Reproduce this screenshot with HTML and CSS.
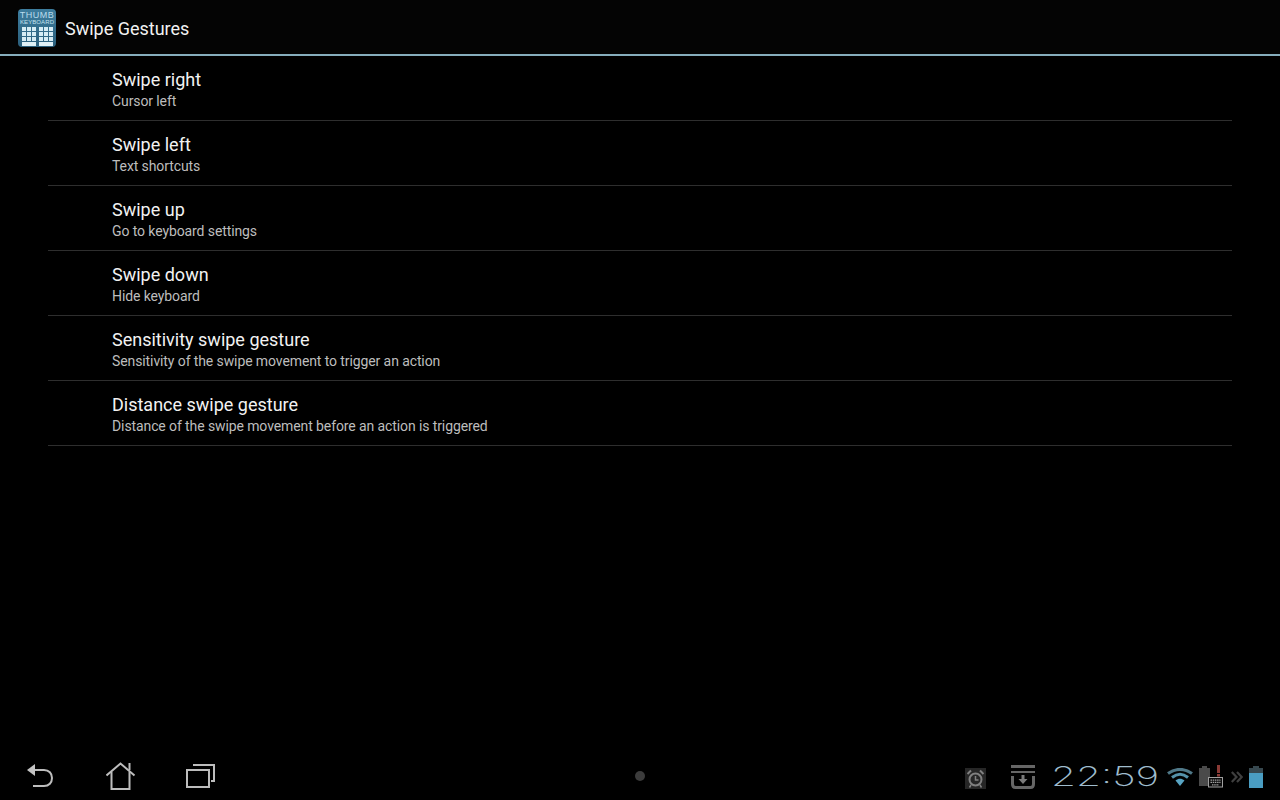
FILE: index.html
```html
<!DOCTYPE html>
<html lang="en">
<head>
<meta charset="utf-8">
<title>Swipe Gestures</title>
<link rel="stylesheet" href="styles.css">
</head>
<body>
<div class="screen">
  <header class="actionbar">
    <div class="appicon">
      <span class="thumb">THUMB</span>
      <span class="kbd">KEYBOARD</span>
      <div class="keys">
        <div class="keygrid"><i></i><i></i><i></i><i></i><i></i><i></i><i></i><i></i><i></i></div>
        <div class="keygrid"><i></i><i></i><i></i><i></i><i></i><i></i><i></i><i></i><i></i></div>
      </div>
      <div class="spacebars"><i></i><i></i></div>
    </div>
    <h1 class="apptitle">Swipe Gestures</h1>
  </header>
  <main class="list">
    <div class="row"><div class="rowtitle">Swipe right</div><div class="rowsub">Cursor left</div></div>
    <div class="row"><div class="rowtitle">Swipe left</div><div class="rowsub">Text shortcuts</div></div>
    <div class="row"><div class="rowtitle">Swipe up</div><div class="rowsub">Go to keyboard settings</div></div>
    <div class="row"><div class="rowtitle">Swipe down</div><div class="rowsub">Hide keyboard</div></div>
    <div class="row"><div class="rowtitle">Sensitivity swipe gesture</div><div class="rowsub">Sensitivity of the swipe movement to trigger an action</div></div>
    <div class="row"><div class="rowtitle">Distance swipe gesture</div><div class="rowsub">Distance of the swipe movement before an action is triggered</div></div>
  </main>
  <footer class="navbar">
    <div class="navbtns">
      <svg class="ic-back" width="30" height="30" viewBox="0 0 30 30" fill="none"><path d="M9 9H18C23 9 26 12.500 26 17C26 21.500 23 25 18 25H7" stroke="#bdbdbd" stroke-width="2"/><path d="M1 9L9 3V15Z" fill="#c4c4c4"/></svg>
      <svg class="ic-home" width="30" height="30" viewBox="0 0 30 30" fill="none"><path d="M0.500 14.500L14.500 2.500L28.500 14.500" stroke="#bdbdbd" stroke-width="2"/><path d="M5.500 11V28H23.500V11" stroke="#bdbdbd" stroke-width="2"/><path d="M23.500 2V9" stroke="#bdbdbd" stroke-width="2"/></svg>
      <svg class="ic-recent" width="30" height="30" viewBox="0 0 30 30" fill="none"><rect x="1" y="9" width="22" height="17" stroke="#bdbdbd" stroke-width="2"/><path d="M7 4H28V20H25" stroke="#bdbdbd" stroke-width="2"/></svg>
    </div>
    <div class="navdot"></div>
    <div class="status">
      <svg class="ic-alarm" width="21" height="21" viewBox="0 0 21 21" fill="none"><rect width="21" height="21" fill="#262626"/><circle cx="10.500" cy="11.500" r="6" stroke="#808080" stroke-width="2"/><path d="M10.500 8V12H13.500" stroke="#808080" stroke-width="1.500"/><path d="M2.500 6L6 2.500M18.500 6L15 2.500" stroke="#808080" stroke-width="2"/><path d="M6 17L4.500 19.500M15 17L16.500 19.500" stroke="#808080" stroke-width="1.500"/></svg>
      <svg class="ic-upload" width="24" height="24" viewBox="0 0 24 24" fill="none"><rect width="24" height="3" fill="#666"/><rect y="6" width="24" height="2" fill="#666"/><path d="M1.500 11V19C1.500 21 2.500 22.500 4.500 22.500H19.500C21.500 22.500 22.500 21 22.500 19V11" stroke="#666" stroke-width="3"/><path d="M10.500 10H13.500V14H16.500L12 19L7.500 14H10.500Z" fill="#7a7a7a"/></svg>
      <span class="clock"><span class="clocktext">22:59</span></span>
      <svg class="ic-wifi" width="26" height="18" viewBox="0 0 26 18" fill="none"><path d="M1 5.500C8 0 18 0 25 5.500" stroke="#4f7888" stroke-width="3"/><path d="M5 9.500C10 5.500 16 5.500 21 9.500" stroke="#5592aa" stroke-width="3"/><path d="M8.500 12.500C11.500 10 14.500 10 17.500 12.500L13 18Z" fill="#58a4c4"/></svg>
      <svg class="ic-kbdbatt" width="24" height="23" viewBox="0 0 24 23"><rect x="0" y="3" width="11" height="18" fill="#4a4a4a"/><rect x="3" y="1" width="5" height="2" fill="#4a4a4a"/><rect x="18" y="0" width="3" height="8" fill="#8a3a35"/><rect x="18" y="9" width="3" height="2.500" fill="#8a3a35"/><rect x="9.500" y="12.500" width="14" height="9.500" fill="#0c0c0c" stroke="#a0a0a0"/><path d="M11.500 15.200H21.500M11.500 17.400H21.500M13 19.800H20" stroke="#a0a0a0" stroke-width="1.200" stroke-dasharray="1.500 .7"/></svg>
      <svg class="ic-chev" width="12" height="12" viewBox="0 0 12 12" fill="none"><path d="M.8 1L5.500 6L.8 11M6 1L10.700 6L6 11" stroke="#3f3f3f" stroke-width="2.200"/></svg>
      <svg class="ic-batt" width="14" height="22" viewBox="0 0 14 22"><rect x="0" y="2" width="14" height="20" fill="#4a9dc2"/><rect x="0" y="2" width="14" height="5" fill="#37484f"/><rect x="4" y="0" width="6" height="2" fill="#37484f"/></svg>
    </div>
  </footer>
</div>
</body>
</html>
```
FILE: styles.css
```css
* { box-sizing: border-box; }
html, body { margin: 0; padding: 0; background: #000; }
body { font-family: Roboto, "Open Sans", sans-serif; color: #fff; }
.screen { width: 1280px; height: 800px; display: flex; flex-direction: column; background: #000; overflow: hidden; }
.actionbar { height: 56px; flex: none; display: flex; align-items: center; gap: 9px; padding: 2px 0 0 18px; border-bottom: 2px solid #86adbc; background: #040404; }
.appicon { width: 38px; height: 38px; border-radius: 4px; background: linear-gradient(#3d7d9e, #2b5f7c); display: flex; flex-direction: column; align-items: center; padding-top: 3px; overflow: hidden; }
.thumb { font: 9px/7px "Liberation Sans", sans-serif; color: #b9dcec; letter-spacing: .5px; }
.kbd { font: 6px/6px "Liberation Sans", sans-serif; color: #c4e2ee; letter-spacing: .1px; }
.keys { display: flex; gap: 3px; margin-top: 2px; }
.keygrid { display: grid; grid-template-columns: repeat(3, 4px); grid-auto-rows: 4px; gap: 1px; }
.keygrid i { background: #d6ecf4; }
.spacebars { display: flex; gap: 3px; margin-top: 1px; }
.spacebars i { width: 14px; height: 4px; background: #dff0f6; }
.apptitle { margin: 1px 0 0; font-size: 18px; font-weight: 400; line-height: 24px; color: #f2f2f2; }
.list { flex: 1; margin: 0 48px; }
.row { height: 65px; padding: 13px 0 0 64px; border-bottom: 1px solid #2e2e2e; }
.rowtitle { font-size: 18px; line-height: 22px; color: #f2f2f2; }
.rowsub { font-size: 14px; line-height: 20px; color: #bdbdbd; letter-spacing: -.1px; }
.navbar { height: 48px; flex: none; display: flex; align-items: center; justify-content: space-between; padding: 0 17px 0 26px; position: relative; }
.navbtns { display: flex; align-items: center; gap: 50px; }
.navbtns svg { flex: none; }
.navdot { width: 10px; height: 10px; border-radius: 50%; background: #3c3c3c; position: absolute; left: 635px; top: 19px; }
.status { display: flex; align-items: center; }
.ic-alarm { margin: 5px 25px 0 0; }
.ic-upload { margin: 2px 16px 0 0; }
.clock { width: 107px; height: 40px; margin: 2px 9px 0 0; display: block; overflow: visible; }
.clocktext { display: inline-block; font-family: Inter, sans-serif; font-weight: 200; font-size: 27px; line-height: 40px; color: #9fbccd; transform: scaleX(1.5); transform-origin: left center; white-space: nowrap; }
.ic-wifi { margin: 2px 6px 0 0; }
.ic-kbdbatt { margin: 1px 8px 0 0; }
.ic-chev { margin: 1px 6px 0 0; }
.ic-batt { margin: 1px 0 0; }
```
